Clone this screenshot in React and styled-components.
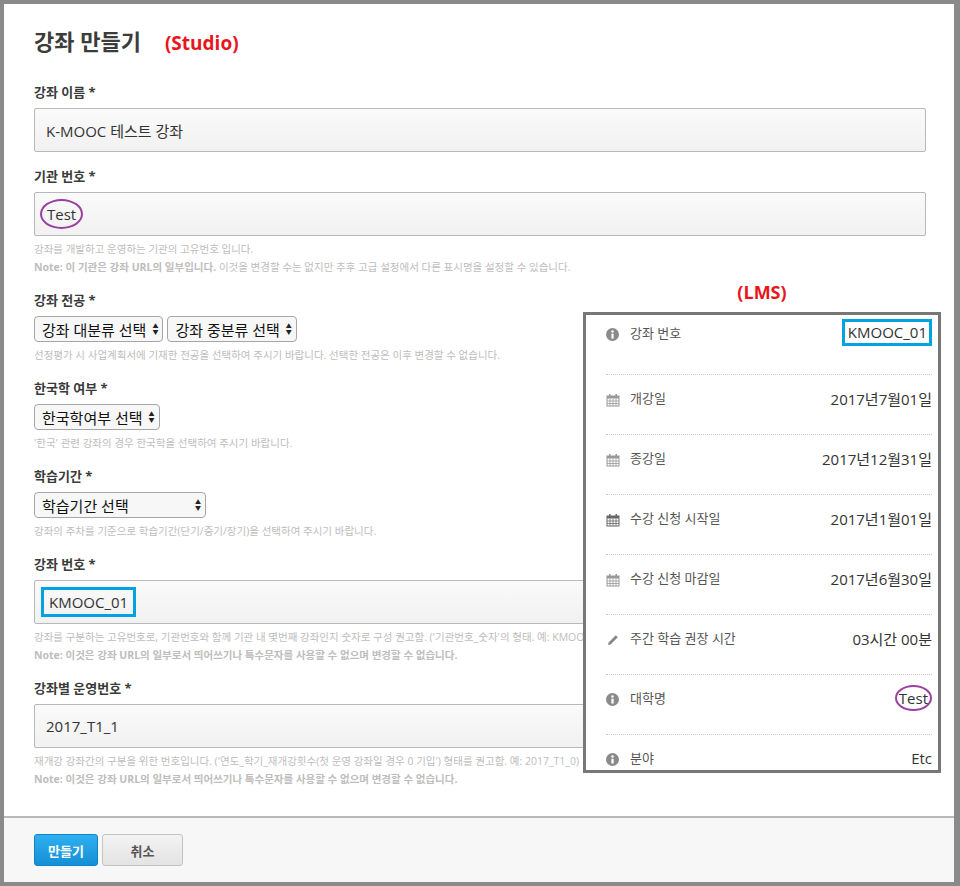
import React from "react";
import styled, { createGlobalStyle } from "styled-components";

const Global = createGlobalStyle`
  html, body { margin: 0; padding: 0; background: #fff; }
  body { font-family: "Open Sans", "Noto Sans CJK KR", sans-serif; color: #333; }
`;

const Frame = styled.div`
  position: relative;
  width: 960px;
  height: 886px;
  box-sizing: border-box;
  border: 4px solid #8a8a8a;
  border-right-width: 6px;
  background: #fff;
  display: flex;
  flex-direction: column;
`;

const Body = styled.div`
  flex: 1;
  padding: 22px 30px 0 30px;
  overflow: hidden;
`;

const Title = styled.h1`
  margin: 0 0 26px;
  font-size: 22px;
  line-height: 30px;
  font-weight: 700;
  color: #3c3c3c;
  display: flex;
  align-items: baseline;
  gap: 24px;
`;

const Red = styled.span`
  color: #e8161b;
  font-size: 19px;
  font-weight: 700;
`;

const Field = styled.div`
  margin-bottom: ${(p) => p.$mb || 16}px;
`;

const Label = styled.div`
  font-size: 13px;
  line-height: 16px;
  font-weight: 700;
  color: #3a3a3a;
  margin-bottom: 8px;
`;

const Input = styled.div`
  height: 44px;
  box-sizing: border-box;
  width: 892px;
  border: 1px solid #b8b8b8;
  border-radius: 2px;
  background: linear-gradient(#fafafa, #f1f1f1);
  display: flex;
  align-items: center;
  padding-left: 11px;
  font-size: 15px;
  color: #333;
`;

const Mark = styled.span`
  display: inline-block;
  padding: ${(p) => (p.$oval ? "3px 5px" : "2px 5px")};
  margin-left: ${(p) => (p.$oval ? -6 : -5)}px;
  border: ${(p) => (p.$oval ? "2px solid #9b3fa0" : "3px solid #00a3e0")};
  border-radius: ${(p) => (p.$oval ? "50%" : "0")};
`;

const Help = styled.div`
  margin-top: ${(p) => p.$mt || 4}px;
  font-size: 10.5px;
  line-height: 18px;
  color: #bdbdbd;
  white-space: nowrap;
  overflow: hidden;
  b { font-weight: 700; }
`;

const Selects = styled.div`
  display: flex;
  gap: 4px;
`;

const Select = styled.div`
  height: 26px;
  box-sizing: border-box;
  width: ${(p) => (p.$w ? p.$w + "px" : "auto")};
  border: 1px solid #a6a6a6;
  border-radius: 4px;
  background: #f7f7f7;
  display: flex;
  align-items: center;
  justify-content: space-between;
  padding: 0 4px 0 7px;
  gap: 6px;
  font-size: 15px;
  color: #111;
  white-space: nowrap;
`;

const Arrows = styled.span`
  display: flex;
  flex-direction: column;
  font-size: 6px;
  line-height: 6px;
  color: #222;
`;

const Footer = styled.div`
  height: 64px;
  flex-shrink: 0;
  border-top: 2px solid #b9b9b9;
  background: #f7f7f7;
  display: flex;
  align-items: center;
  gap: 4px;
  padding-left: 30px;
`;

const Button = styled.button`
  height: 32px;
  width: ${(p) => p.$w}px;
  border-radius: 3px;
  font-family: inherit;
  font-size: 13px;
  font-weight: 700;
  border: 1px solid ${(p) => (p.$primary ? "#0e83c6" : "#c3c3c3")};
  background: ${(p) => (p.$primary ? "linear-gradient(#2fb0ef, #148fd6)" : "linear-gradient(#f3f3f3, #e3e3e3)")};
  color: ${(p) => (p.$primary ? "#fff" : "#555")};
`;

const LmsWrap = styled.div`
  position: absolute;
  left: 579px;
  top: 276px;
  width: 358px;
`;

const LmsTitle = styled.div`
  text-align: center;
  color: #e8161b;
  font-weight: 700;
  font-size: 18px;
  margin-bottom: 8px;
`;

const Panel = styled.div`
  border: 3px solid #777;
  background: #fff;
  padding: 0 6px 0 20px;
  height: 461px;
  box-sizing: border-box;
  overflow: hidden;
`;

const Row = styled.div`
  display: flex;
  align-items: flex-start;
  height: 60px;
  box-sizing: border-box;
  padding-top: ${(p) => (p.$first ? 8 : 13)}px;
  border-bottom: 1px dotted #c8c8c8;
  &:last-child { border-bottom: none; }
`;

const Icon = styled.span`
  width: 16px;
  margin: 5px 8px 0 0;
  display: flex;
  color: #888;
`;

const RowLabel = styled.span`
  flex: 1;
  font-size: 13px;
  color: #555;
`;

const RowValue = styled.span`
  font-size: 15px;
  font-weight: 400;
  color: #333;
`;

const Boxed = styled.span`
  border: 3px solid #00a3e0;
  padding: 0 2px 1px 3px;
  margin-top: -4px;
  font-size: 15px;
  color: #333;
`;

const InfoIcon = () => (
  <svg width="13" height="13" viewBox="0 0 16 16">
    <circle cx="8" cy="8" r="8" fill="#8a8a8a" />
    <circle cx="8" cy="4.3" r="1.5" fill="#fff" />
    <rect x="6.6" y="7" width="2.8" height="6" fill="#fff" />
  </svg>
);

const CalIcon = ({ dark }) => {
  const c = dark ? "#666" : "#999";
  return (
    <svg width="14" height="14" viewBox="0 0 14 14">
      <rect x="1" y="3" width="12" height="10" fill="none" stroke={c} />
      <rect x="1" y="3" width="12" height="2.5" fill={c} />
      <rect x="3" y="1" width="1.5" height="3" fill={c} />
      <rect x="9.5" y="1" width="1.5" height="3" fill={c} />
      {[4, 7, 10].map((x) => (
        <line key={"v" + x} x1={x} y1="5.5" x2={x} y2="13" stroke={c} strokeWidth="0.8" />
      ))}
      {[8, 10.5].map((y) => (
        <line key={"h" + y} x1="1" y1={y} x2="13" y2={y} stroke={c} strokeWidth="0.8" />
      ))}
    </svg>
  );
};

const PenIcon = () => (
  <svg width="14" height="14" viewBox="0 0 14 14">
    <path d="M2 12 L2.6 9.4 L9.8 2.2 L11.8 4.2 L4.6 11.4 Z" fill="#888" />
  </svg>
);

const rows = [
  { icon: <InfoIcon />, label: "강좌 번호", value: "KMOOC_01", boxed: true },
  { icon: <CalIcon />, label: "개강일", value: "2017년7월01일" },
  { icon: <CalIcon />, label: "종강일", value: "2017년12월31일" },
  { icon: <CalIcon dark />, label: "수강 신청 시작일", value: "2017년1월01일" },
  { icon: <CalIcon />, label: "수강 신청 마감일", value: "2017년6월30일" },
  { icon: <PenIcon />, label: "주간 학습 권장 시간", value: "03시간 00분" },
  { icon: <InfoIcon />, label: "대학명", value: "Test", oval: true },
  { icon: <InfoIcon />, label: "분야", value: "Etc" },
];

const Arr = () => (
  <Arrows>
    <span>▲</span>
    <span>▼</span>
  </Arrows>
);

export default function App() {
  return (
    <>
      <Global />
      <Frame>
        <Body>
          <Title>
            강좌 만들기 <Red>(Studio)</Red>
          </Title>
          <Field>
            <Label>강좌 이름 *</Label>
            <Input>K-MOOC 테스트 강좌</Input>
          </Field>
          <Field>
            <Label>기관 번호 *</Label>
            <Input>
              <Mark $oval>Test</Mark>
            </Input>
            <Help>
              강좌를 개발하고 운영하는 기관의 고유번호 입니다.
              <br />
              <b>Note: 이 기관은 강좌 URL의 일부입니다.</b> 이것을 변경할 수는 없지만 추후 고급 설정에서 다른 표시명을 설정할 수 있습니다.
            </Help>
          </Field>
          <Field>
            <Label>강좌 전공 *</Label>
            <Selects>
              <Select>강좌 대분류 선택 <Arr /></Select>
              <Select>강좌 중분류 선택 <Arr /></Select>
            </Selects>
            <Help>선정평가 시 사업계획서에 기재한 전공을 선택하여 주시기 바랍니다. 선택한 전공은 이후 변경할 수 없습니다.</Help>
          </Field>
          <Field>
            <Label>한국학 여부 *</Label>
            <Selects>
              <Select>한국학여부 선택 <Arr /></Select>
            </Selects>
            <Help>'한국' 관련 강좌의 경우 한국학을 선택하여 주시기 바랍니다.</Help>
          </Field>
          <Field>
            <Label>학습기간 *</Label>
            <Selects>
              <Select $w={172}>학습기간 선택 <Arr /></Select>
            </Selects>
            <Help>강좌의 주차를 기준으로 학습기간(단기/중기/장기)을 선택하여 주시기 바랍니다.</Help>
          </Field>
          <Field>
            <Label>강좌 번호 *</Label>
            <Input>
              <Mark>KMOOC_01</Mark>
            </Input>
            <Help>
              강좌를 구분하는 고유번호로, 기관번호와 함께 기관 내 몇번째 강좌인지 숫자로 구성 권고함. ('기관번호_숫자'의 형태. 예: KMOOC_01)
              <br />
              <b>Note: 이것은 강좌 URL의 일부로서 띄어쓰기나 특수문자를 사용할 수 없으며 변경할 수 없습니다.</b>
            </Help>
          </Field>
          <Field>
            <Label>강좌별 운영번호 *</Label>
            <Input>2017_T1_1</Input>
            <Help>
              재개강 강좌간의 구분을 위한 번호입니다. ('연도_학기_재개강횟수(첫 운영 강좌일 경우 0 기입') 형태를 권고함. 예: 2017_T1_0)
              <br />
              <b>Note: 이것은 강좌 URL의 일부로서 띄어쓰기나 특수문자를 사용할 수 없으며 변경할 수 없습니다.</b>
            </Help>
          </Field>
        </Body>
        <Footer>
          <Button $primary $w={64}>만들기</Button>
          <Button $w={81}>취소</Button>
        </Footer>
        <LmsWrap>
          <LmsTitle>(LMS)</LmsTitle>
          <Panel>
            {rows.map((r, i) => (
              <Row key={r.label} $first={i === 0}>
                <Icon>{r.icon}</Icon>
                <RowLabel>{r.label}</RowLabel>
                {r.boxed ? (
                  <Boxed>{r.value}</Boxed>
                ) : r.oval ? (
                  <RowValue>
                    <Mark $oval style={{ marginLeft: 0, marginTop: -5, padding: "1px 2px" }}>{r.value}</Mark>
                  </RowValue>
                ) : (
                  <RowValue>{r.value}</RowValue>
                )}
              </Row>
            ))}
          </Panel>
        </LmsWrap>
      </Frame>
    </>
  );
}
